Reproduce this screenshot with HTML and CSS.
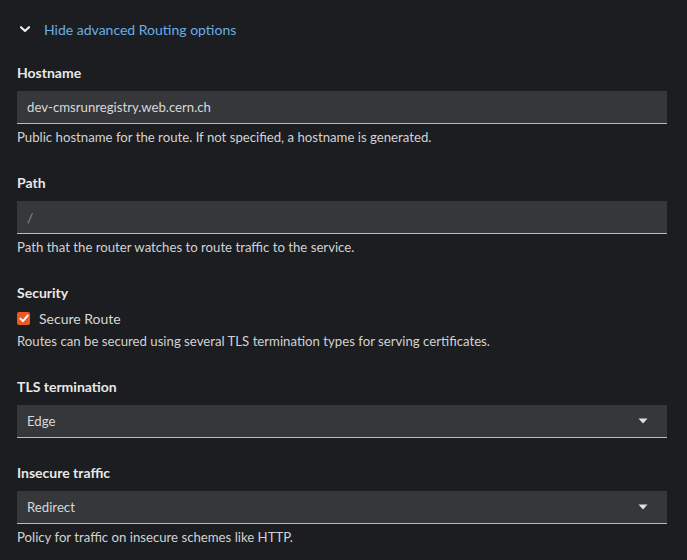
FILE: index.html
```html
<!DOCTYPE html>
<html>
<head>
<meta charset="utf-8">
<link rel="stylesheet" href="styles.css">
</head>
<body>
<div class="page">
  <form class="form">
    <button type="button" class="toggle">
      <svg class="chev" width="10" height="7" viewBox="0 0 10 7"><path d="M1 1.2 L5 5 L9 1.2" fill="none" stroke="#e8e8e8" stroke-width="2.2" stroke-linecap="round" stroke-linejoin="round"/></svg>
      <span>Hide advanced Routing options</span>
    </button>

    <div class="group">
      <label class="label">Hostname</label>
      <div class="input"><span class="value">dev-cmsrunregistry.web.cern.ch</span></div>
      <div class="helper">Public hostname for the route. If not specified, a hostname is generated.</div>
    </div>

    <div class="group">
      <label class="label">Path</label>
      <div class="input"><span class="placeholder">/</span></div>
      <div class="helper">Path that the router watches to route traffic to the service.</div>
    </div>

    <div class="group">
      <label class="label label-tight">Security</label>
      <div class="check">
        <span class="box"><svg width="10" height="9" viewBox="0 0 10 9"><path d="M1.3 4.6 L3.9 7.1 L8.7 1.6" fill="none" stroke="#fff" stroke-width="2" stroke-linecap="round" stroke-linejoin="round"/></svg></span>
        <span class="check-label">Secure Route</span>
      </div>
      <div class="helper helper-tight">Routes can be secured using several TLS termination types for serving certificates.</div>
    </div>

    <div class="group">
      <label class="label">TLS termination</label>
      <div class="input select"><span class="value">Edge</span><svg class="caret" width="10" height="6" viewBox="0 0 10 6"><path d="M0.5 0.5 H9.5 L5 5.5 Z" fill="#e0e0e0"/></svg></div>
    </div>

    <div class="group">
      <label class="label">Insecure traffic</label>
      <div class="input select"><span class="value">Redirect</span><svg class="caret" width="10" height="6" viewBox="0 0 10 6"><path d="M0.5 0.5 H9.5 L5 5.5 Z" fill="#e0e0e0"/></svg></div>
      <div class="helper">Policy for traffic on insecure schemes like HTTP.</div>
    </div>
  </form>
</div>
</body>
</html>
```

FILE: styles.css
```css
html, body {
  margin: 0;
  padding: 0;
  background: #1b1d21;
}
body {
  font-family: Lato, "Open Sans", sans-serif;
  font-size: 14px;
  line-height: 21px;
  color: #e0e0e0;
}
.page {
  width: 687px;
  height: 560px;
  overflow: hidden;
  box-sizing: border-box;
  padding: 19px 20px 0 17px;
}
.form {
  display: flex;
  flex-direction: column;
  gap: 24px;
}
.toggle {
  display: flex;
  align-items: center;
  gap: 14px;
  background: none;
  border: 0;
  padding: 0 0 0 3px;
  margin: 0 0 -2px 0;
  font: inherit;
  color: #6aaee6;
  cursor: pointer;
  height: 21px;
}
.chev { display: block; }
.group {
  display: flex;
  flex-direction: column;
}
.label {
  font-weight: 700;
  color: #e8e8e8;
  margin-bottom: 8px;
}
.label-tight { margin-bottom: 5px; }
.input {
  height: 33px;
  background: #36373a;
  border-bottom: 1px solid #b8bbbe;
  box-sizing: border-box;
  display: flex;
  align-items: center;
  padding: 0 10px;
}
.value { color: #d8d8d8; font-size: 13.2px; }
.placeholder { color: #8a8d90; }
.select { justify-content: space-between; padding-right: 19px; }
.caret { display: block; }
.helper {
  margin-top: 3px;
  color: #d2d2d2;
  font-size: 13.2px;
}
.helper-tight { margin-top: 2px; }
.check {
  display: flex;
  align-items: center;
  gap: 9px;
  height: 21px;
}
.box {
  width: 13px;
  height: 13px;
  border-radius: 2px;
  background: #ec5a1f;
  display: flex;
  align-items: center;
  justify-content: center;
}
.check-label { color: #d8d8d8; }
```
